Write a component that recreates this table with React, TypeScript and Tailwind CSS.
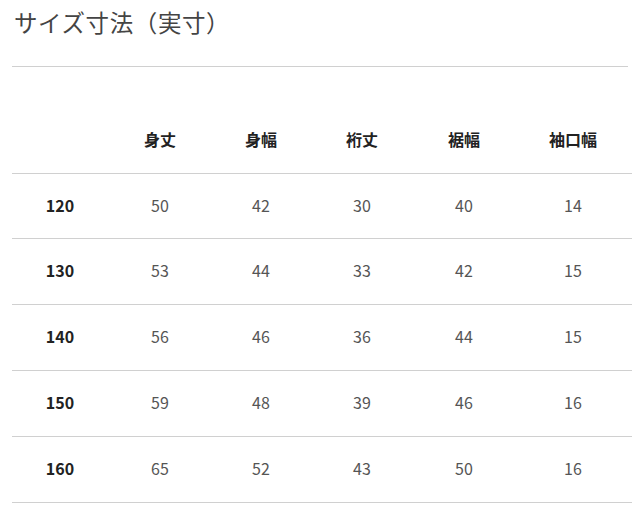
const cols = ['身丈', '身幅', '裄丈', '裾幅', '袖口幅']

const rows = [
  { size: '120', values: ['50', '42', '30', '40', '14'] },
  { size: '130', values: ['53', '44', '33', '42', '15'] },
  { size: '140', values: ['56', '46', '36', '44', '15'] },
  { size: '150', values: ['59', '48', '39', '46', '16'] },
  { size: '160', values: ['65', '52', '43', '50', '16'] },
]

const grid = 'grid grid-cols-[96px_104px_98px_104px_100px_118px] items-center text-center'

export default function App() {
  return (
    <div className="w-[640px] h-[510px] bg-white px-[12px] overflow-hidden"
         style={{ fontFamily: '"Noto Sans CJK JP", "Noto Sans", sans-serif' }}>
      {/* Title */}
      <div className="h-[67px] border-b border-[#d0d0d0] pl-[2px] pt-[5px]">
        <h1 className="text-[23.5px] leading-[34px] font-normal text-[#444] tracking-[0.6px]">サイズ寸法（実寸）</h1>
      </div>

      {/* Size table */}
      <div className="mt-[40px] w-[620px]">
        <div className={`${grid} h-[67px] border-b border-[#d0d0d0] pb-[2px]`}>
          <div />
          {cols.map(c => (
            <div key={c} className="text-[16px] font-bold text-[#222]">{c}</div>
          ))}
        </div>
        {rows.map((r, ri) => (
          <div key={r.size}
               className={`${grid} ${ri === 0 ? 'h-[65px]' : 'h-[66px]'} border-b border-[#d0d0d0] pb-[3px]`}>
            <div className="text-[16px] font-bold text-[#222]">{r.size}</div>
            {r.values.map((v, i) => (
              <div key={i} className="text-[16px] font-normal text-[#555]">{v}</div>
            ))}
          </div>
        ))}
      </div>
    </div>
  )
}
